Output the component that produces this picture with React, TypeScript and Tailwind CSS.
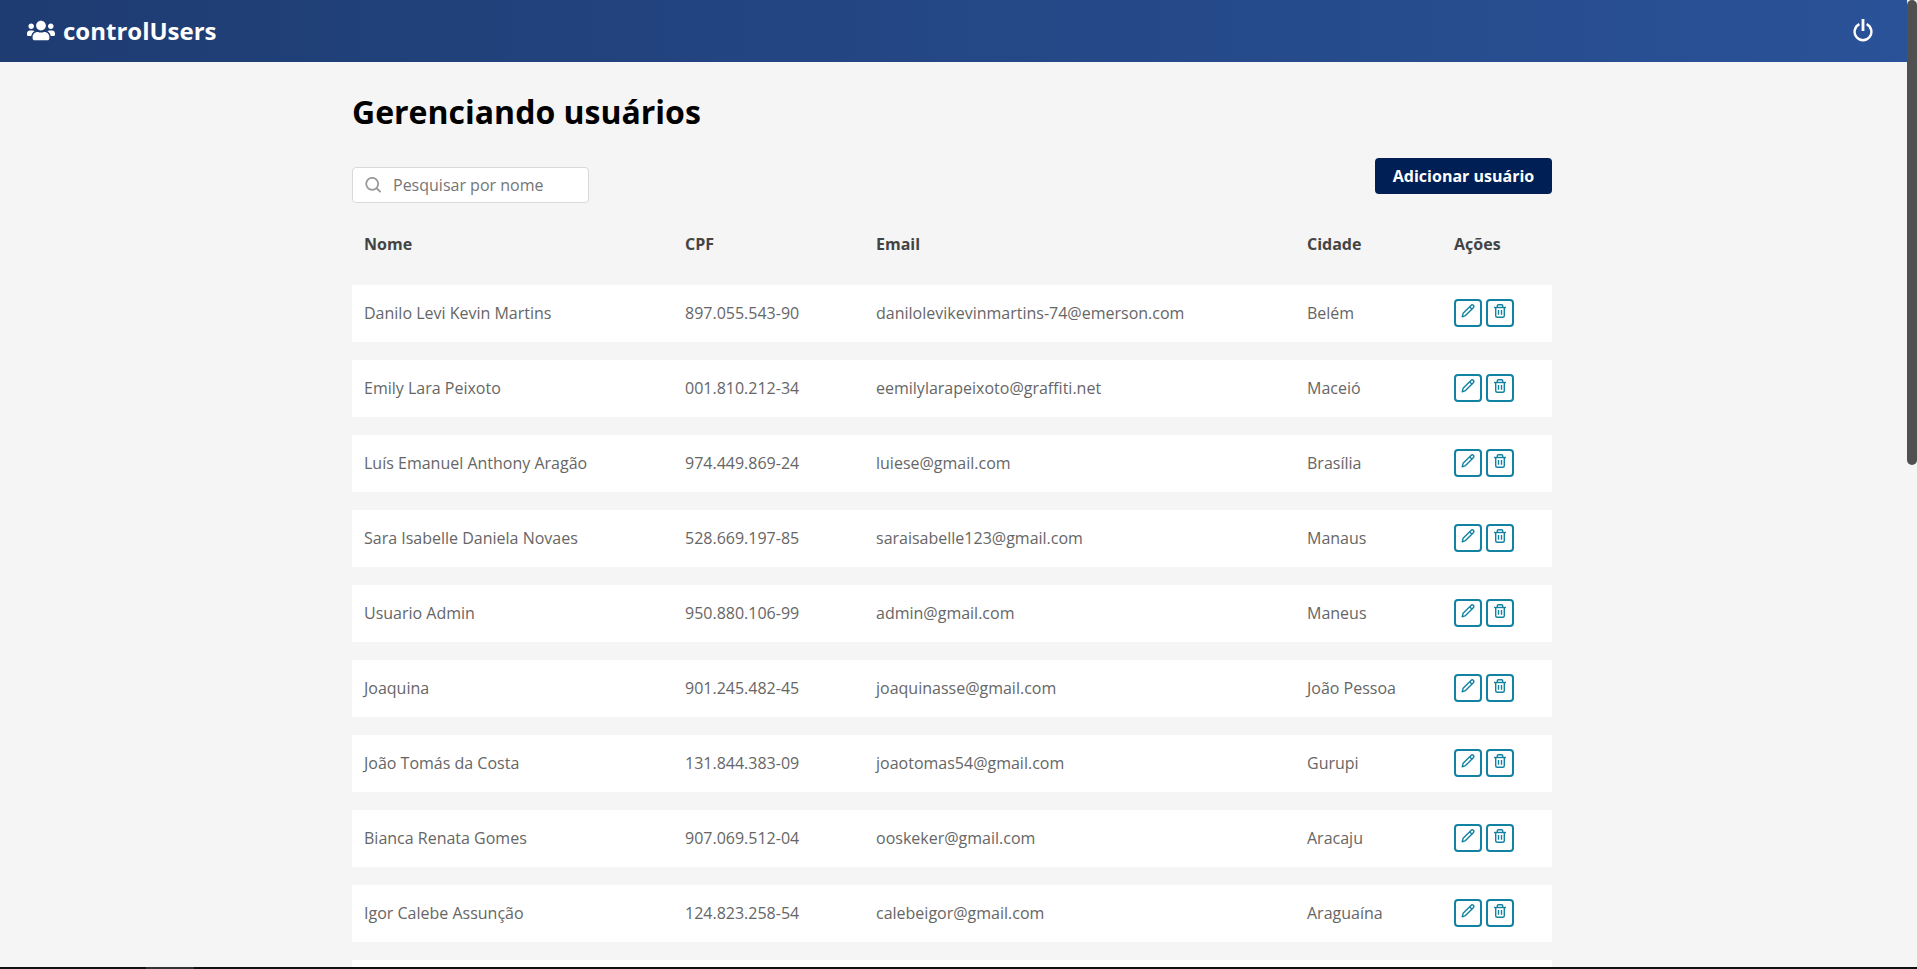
import { FaUsers } from "react-icons/fa";

type User = { name: string; cpf: string; email: string; city: string };

const users: User[] = [
  { name: "Danilo Levi Kevin Martins", cpf: "897.055.543-90", email: "danilolevikevinmartins-74@emerson.com", city: "Belém" },
  { name: "Emily Lara Peixoto", cpf: "001.810.212-34", email: "eemilylarapeixoto@graffiti.net", city: "Maceió" },
  { name: "Luís Emanuel Anthony Aragão", cpf: "974.449.869-24", email: "luiese@gmail.com", city: "Brasília" },
  { name: "Sara Isabelle Daniela Novaes", cpf: "528.669.197-85", email: "saraisabelle123@gmail.com", city: "Manaus" },
  { name: "Usuario Admin", cpf: "950.880.106-99", email: "admin@gmail.com", city: "Maneus" },
  { name: "Joaquina", cpf: "901.245.482-45", email: "joaquinasse@gmail.com", city: "João Pessoa" },
  { name: "João Tomás da Costa", cpf: "131.844.383-09", email: "joaotomas54@gmail.com", city: "Gurupi" },
  { name: "Bianca Renata Gomes", cpf: "907.069.512-04", email: "ooskeker@gmail.com", city: "Aracaju" },
  { name: "Igor Calebe Assunção", cpf: "124.823.258-54", email: "calebeigor@gmail.com", city: "Araguaína" },
];

const columns = "grid grid-cols-[321px_191px_431px_147px_110px] pl-3";

function PowerIcon() {
  return (
    <svg width="20" height="24" viewBox="0 0 20 24" fill="none" stroke="currentColor" strokeWidth="2.4">
      <path d="M10 1v12" strokeWidth="2.8" />
      <path d="M6.4 6.2a8.4 8.4 0 1 0 7.2 0" />
    </svg>
  );
}

function SearchIcon() {
  return (
    <svg width="16" height="16" viewBox="0 0 16 16" fill="none" stroke="currentColor" strokeWidth="1.8">
      <circle cx="7.2" cy="6.8" r="6" />
      <path d="M11.4 11l4.2 4.2" />
    </svg>
  );
}

function PencilIcon() {
  return (
    <svg width="14" height="14" viewBox="0 0 14 14" fill="none" stroke="currentColor" strokeWidth="1.4" strokeLinejoin="round">
      <path d="M1.2 12.8l.9-3.5 7.9-7.9c.7-.7 1.7-.7 2.3-.1.7.7.7 1.7 0 2.4l-7.8 7.9z" />
      <path d="M8.6 2.8l2.5 2.5" />
    </svg>
  );
}

function TrashIcon() {
  return (
    <svg width="14" height="14" viewBox="0 0 14 14" fill="none" stroke="currentColor" strokeWidth="1.4">
      <path d="M1 3.5h12" />
      <path d="M4.3 3.3V1.7q0-.9.9-.9h3.6q.9 0 .9.9v1.6" />
      <path d="M2.7 3.5v8.2q0 1.5 1.6 1.5h5.4q1.6 0 1.6-1.5V3.5" />
      <path d="M5.5 6v4.8M8.5 6v4.8" />
    </svg>
  );
}

const actionButton =
  "flex h-7 w-7 items-start justify-center rounded border-2 border-[#1282a2] pt-[3px] text-[#1282a2]";

export default function App() {
  return (
    <div className="flex h-[969px] w-[1917px] flex-col overflow-hidden bg-[#f5f5f5] font-['Open_Sans',sans-serif] text-base">
      <div className="flex h-[967px] shrink-0">
        <div className="flex w-[1907px] flex-col overflow-hidden">
          <header className="flex h-[62px] shrink-0 items-center justify-between bg-linear-to-r from-[#1e3c72] to-[#2a5298] pr-[34px] pl-[27px] text-white">
            <div className="flex items-center gap-2">
              <FaUsers className="mb-0.5 h-[23px] w-7" />
              <span className="text-2xl font-bold">controlUsers</span>
            </div>
            <button className="-mt-0.5" aria-label="Sair">
              <PowerIcon />
            </button>
          </header>

          <main className="ml-[352px] flex w-[1200px] flex-col">
            <h1 className="mt-[28px] text-[32px] leading-[44px] font-bold text-black">Gerenciando usuários</h1>
            <div className="mt-6 flex h-[45px] justify-between">
              <div className="mt-[9px] flex h-9 w-[237px] items-center rounded border border-[#d9d9d9] bg-white pl-3 text-[#999]">
                <SearchIcon />
                <input
                  className="ml-3 w-[180px] text-base text-[#757575] outline-none placeholder:text-[#757575]"
                  placeholder="Pesquisar por nome"
                />
              </div>
              <button className="h-9 w-[177px] rounded bg-[#001f54] text-base font-bold text-white">
                Adicionar usuário
              </button>
            </div>

            <div className={`${columns} mt-3 h-[57px] items-center font-bold text-[#444]`}>
              <span>Nome</span>
              <span>CPF</span>
              <span>Email</span>
              <span>Cidade</span>
              <span>Ações</span>
            </div>

            <div className="mt-[13px] flex flex-col gap-[18px]">
              {users.map((user) => (
                <div key={user.cpf} className={`${columns} h-[57px] items-center bg-white pb-px text-[#666]`}>
                  <span>{user.name}</span>
                  <span>{user.cpf}</span>
                  <span>{user.email}</span>
                  <span>{user.city}</span>
                  <div className="flex gap-1">
                    <button className={actionButton} aria-label="Editar">
                      <PencilIcon />
                    </button>
                    <button className={actionButton} aria-label="Excluir">
                      <TrashIcon />
                    </button>
                  </div>
                </div>
              ))}
              <div className="h-[57px] bg-white" />
            </div>
          </main>
        </div>
        <div className="w-2.5 bg-[#f5f5f5]">
          <div className="h-[465px] rounded-full bg-[#505050]" />
        </div>
      </div>
      <div className="h-0.5 shrink-0 bg-[#111113] pl-[146px]">
        <div className="h-0.5 w-12 bg-[#333335]" />
      </div>
    </div>
  );
}
